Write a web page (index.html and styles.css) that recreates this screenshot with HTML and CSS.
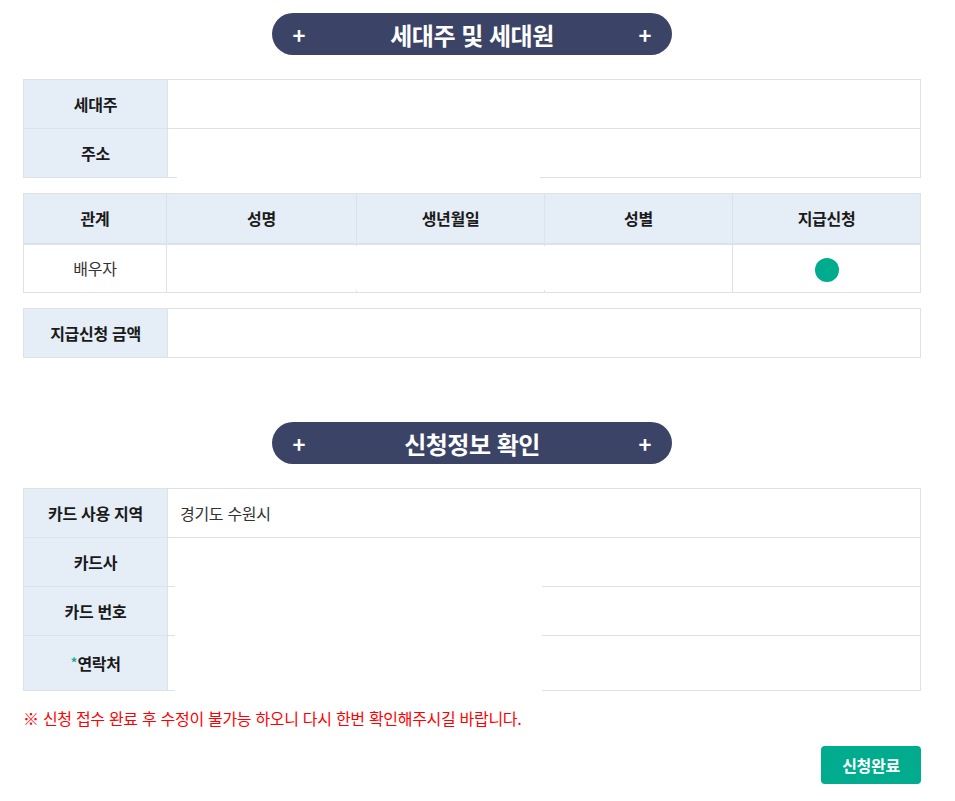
FILE: index.html
```html
<!DOCTYPE html>
<html lang="ko">

<head>
    <meta charset="UTF-8">
    <meta name="viewport" content="width=device-width, initial-scale=1.0">
    <title>신청정보 확인</title>
    <link rel="stylesheet" href="styles.css">
</head>

<body>
    <div id="wrap">
        <h2 class="sec-title"><span class="plus">+</span><span class="txt">세대주 및 세대원</span><span class="plus">+</span></h2>

        <div class="tbl-box">
            <table class="info-tbl">
                <tr>
                    <th>세대주</th>
                    <td></td>
                </tr>
                <tr>
                    <th>주소</th>
                    <td></td>
                </tr>
            </table>
            <div class="mask mask-addr"></div>
        </div>

        <div class="tbl-box">
            <table class="list-tbl">
                <thead>
                    <tr>
                        <th class="c1">관계</th>
                        <th class="c2">성명</th>
                        <th class="c3">생년월일</th>
                        <th class="c4">성별</th>
                        <th>지급신청</th>
                    </tr>
                </thead>
                <tbody>
                    <tr>
                        <td>배우자</td>
                        <td></td>
                        <td></td>
                        <td></td>
                        <td><span class="dot"></span></td>
                    </tr>
                </tbody>
            </table>
            <div class="mask mask-member"></div>
        </div>

        <table class="info-tbl">
            <tr>
                <th>지급신청 금액</th>
                <td></td>
            </tr>
        </table>

        <h2 class="sec-title sec-second"><span class="plus">+</span><span class="txt">신청정보 확인</span><span class="plus">+</span></h2>

        <div class="tbl-box">
            <table class="info-tbl">
                <tr>
                    <th>카드 사용 지역</th>
                    <td>경기도 수원시</td>
                </tr>
                <tr>
                    <th>카드사</th>
                    <td></td>
                </tr>
                <tr>
                    <th>카드 번호</th>
                    <td></td>
                </tr>
                <tr class="tall">
                    <th><em>*</em>연락처</th>
                    <td></td>
                </tr>
            </table>
            <div class="mask mask-card"></div>
        </div>

        <p class="notice">※ 신청 접수 완료 후 수정이 불가능 하오니 다시 한번 확인해주시길 바랍니다.</p>

        <div class="btn-area">
            <button type="button" class="btn-ok">신청완료</button>
        </div>
    </div>
</body>

</html>
```

FILE: styles.css
```css
* {
    padding: 0;
    margin: 0;
    box-sizing: border-box;
}

body {
    font-family: "Noto Sans CJK KR", "Noto Sans", sans-serif;
    color: #222;
    background: #fff;
}

#wrap {
    width: 898px;
    margin-left: 23px;
    padding-top: 13px;
    padding-bottom: 17px;
}

.sec-title {
    width: 400px;
    height: 42px;
    margin: 0 auto 24px;
    padding: 0 20px;
    border-radius: 21px;
    background: #3b4466;
    color: #fff;
    display: flex;
    align-items: center;
    justify-content: space-between;
    font-size: 24px;
    font-weight: 700;
}

.sec-title .plus {
    font-size: 22px;
    width: 14px;
    text-align: center;
}

.sec-title .txt {
    letter-spacing: -0.5px;
}

.sec-second {
    margin-top: 64px;
}

table {
    width: 100%;
    border-collapse: collapse;
    table-layout: fixed;
}

.tbl-box {
    position: relative;
    margin-bottom: 15px;
}

.info-tbl th,
.info-tbl td,
.list-tbl th,
.list-tbl td {
    border: 1px solid #dde1e8;
    height: 49px;
    font-size: 16px;
    letter-spacing: -0.3px;
}

.info-tbl th {
    width: 144px;
    background: #e5edf6;
    font-weight: 700;
    text-align: center;
    color: #1a1a1a;
}

.info-tbl td {
    padding-left: 12px;
    color: #333;
}

.info-tbl .tall th,
.info-tbl .tall td {
    height: 55px;
}

.info-tbl em {
    font-style: normal;
    color: #00a88c;
    font-weight: 400;
}

.list-tbl th {
    background: #e5edf6;
    font-weight: 700;
    text-align: center;
    height: 50px;
    border-bottom: 2px solid #dde1e8;
    color: #1a1a1a;
}

.list-tbl td {
    text-align: center;
    color: #333;
}

.list-tbl .c1 {
    width: 143px;
}

.list-tbl .c2 {
    width: 190px;
}

.list-tbl .c3,
.list-tbl .c4 {
    width: 188px;
}

.dot {
    display: inline-block;
    width: 24px;
    height: 24px;
    border-radius: 50%;
    background: #00ab8e;
    vertical-align: middle;
}

/* 개인정보 가림 */
.mask {
    position: absolute;
    background: #fff;
}

.mask-addr {
    left: 154px;
    width: 363px;
    top: 72px;
    height: 30px;
}

.mask-member {
    left: 147px;
    width: 560px;
    top: 53px;
    height: 44px;
}

.mask-card {
    left: 152px;
    width: 367px;
    top: 50px;
    height: 160px;
}

.notice {
    margin-top: 5px;
    font-size: 16px;
    letter-spacing: -0.3px;
    color: #f00;
    line-height: 24px;
}

.btn-area {
    display: flex;
    justify-content: flex-end;
    margin-top: 16px;
}

.btn-ok {
    width: 100px;
    height: 38px;
    border: 0;
    border-radius: 4px;
    background: #00ab8e;
    color: #fff;
    font-family: inherit;
    font-size: 16px;
    font-weight: 700;
    letter-spacing: -0.3px;
    cursor: pointer;
}
```
